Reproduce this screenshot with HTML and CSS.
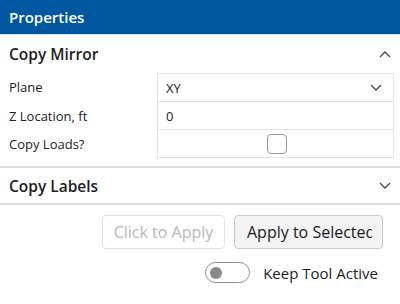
FILE: index.html
```html
<!DOCTYPE html>
<html>
<head>
<meta charset="utf-8">
<link rel="stylesheet" href="styles.css">
</head>
<body>
<div class="panel">
  <div class="header">Properties</div>
  <div class="section-head">
    <span class="section-title">Copy Mirror</span>
    <svg class="chev" width="12" height="7" viewBox="0 0 12 7"><path d="M1 6 L6 1 L11 6" fill="none" stroke="#444" stroke-width="1.3"/></svg>
  </div>
  <div class="grid">
    <div class="label">Plane</div>
    <div class="value first select"><span>XY</span>
      <svg class="chev" width="12" height="7" viewBox="0 0 12 7"><path d="M1 1 L6 6 L11 1" fill="none" stroke="#444" stroke-width="1.3"/></svg>
    </div>
    <div class="label">Z Location, ft</div>
    <div class="value"><span>0</span></div>
    <div class="label">Copy Loads?</div>
    <div class="value center"><span class="checkbox"></span></div>
  </div>
  <div class="divider"></div>
  <div class="section-head labels">
    <span class="section-title">Copy Labels</span>
    <svg class="chev" width="12" height="7" viewBox="0 0 12 7"><path d="M1 1 L6 6 L11 1" fill="none" stroke="#444" stroke-width="1.3"/></svg>
  </div>
  <div class="divider"></div>
  <div class="actions">
    <button class="btn disabled">Click to Apply</button>
    <button class="btn primary"><span class="clip">Apply to Selected</span></button>
  </div>
  <div class="toggle-row">
    <span class="toggle"><span class="knob"></span></span>
    <span class="toggle-label">Keep Tool Active</span>
  </div>
</div>
</body>
</html>
```

FILE: styles.css
```css
html, body {
  margin: 0;
  padding: 0;
  background: #ffffff;
}
body {
  font-family: "Open Sans", "Noto Sans", sans-serif;
  color: #222;
  width: 400px;
  height: 304px;
  overflow: hidden;
}
.panel {
  display: flex;
  flex-direction: column;
}
.header {
  height: 34px;
  background: #00579f;
  color: #fff;
  font-size: 15px;
  font-weight: 600;
  line-height: 34px;
  padding-left: 9px;
  border-bottom: 1px solid #d8e4ef;
}
.section-head {
  height: 38px;
  display: flex;
  align-items: center;
  justify-content: space-between;
  padding: 0 9px 0 9px;
}
.section-title {
  font-size: 15.5px;
  font-weight: 600;
  color: #1e1e1e;
}
.grid {
  display: grid;
  grid-template-columns: 157px 237px;
}
.label {
  height: 28px;
  line-height: 28px;
  font-size: 13px;
  padding-left: 9px;
  color: #222;
}
.value {
  height: 27px;
  border: 1px solid #e3e3e3;
  border-top: none;
  display: flex;
  align-items: center;
  justify-content: space-between;
  padding: 0 11px 0 8px;
  font-size: 13px;
  color: #222;
}
.value.first {
  border-top: 1px solid #e3e3e3;
  height: 27px;
}
.value.center {
  justify-content: center;
  padding: 0;
}
.checkbox {
  width: 18px;
  height: 18px;
  border: 1.5px solid #9a9a9a;
  border-radius: 4px;
  display: block;
  margin-left: 2px;
}
.divider {
  height: 2px;
  background: #dcdcdc;
  margin-top: 8px;
}
.section-head.labels {
  height: 35px;
}
.section-head.labels + .divider {
  margin-top: 0;
}
.actions {
  display: flex;
  justify-content: flex-end;
  gap: 9px;
  padding: 10px 17px 0 0;
}
.btn {
  height: 34px;
  border-radius: 4px;
  font-family: inherit;
  font-size: 16px;
  padding: 0 8px;
  display: flex;
  align-items: center;
}
.btn.disabled {
  width: 123px;
  background: #fff;
  border: 1px solid #e2e2e2;
  color: #b8b8b8;
  justify-content: center;
}
.btn.primary {
  width: 149px;
  background: #f3f3f3;
  border: 1px solid #c8c8c8;
  color: #1a1a1a;
  padding: 0 10px 0 12px;
}
.clip {
  display: block;
  overflow: hidden;
  white-space: nowrap;
  width: 100%;
  text-align: left;
}
.toggle-row {
  display: flex;
  justify-content: flex-end;
  align-items: center;
  gap: 13px;
  padding: 13px 22px 0 0;
}
.toggle {
  width: 45px;
  height: 21px;
  border: 1px solid #8e8e8e;
  border-radius: 11px;
  display: flex;
  align-items: center;
  padding-left: 4px;
  box-sizing: border-box;
}
.knob {
  width: 12px;
  height: 12px;
  border-radius: 50%;
  background: #8a8a8a;
}
.toggle-label {
  font-size: 15px;
  color: #222;
}
```
